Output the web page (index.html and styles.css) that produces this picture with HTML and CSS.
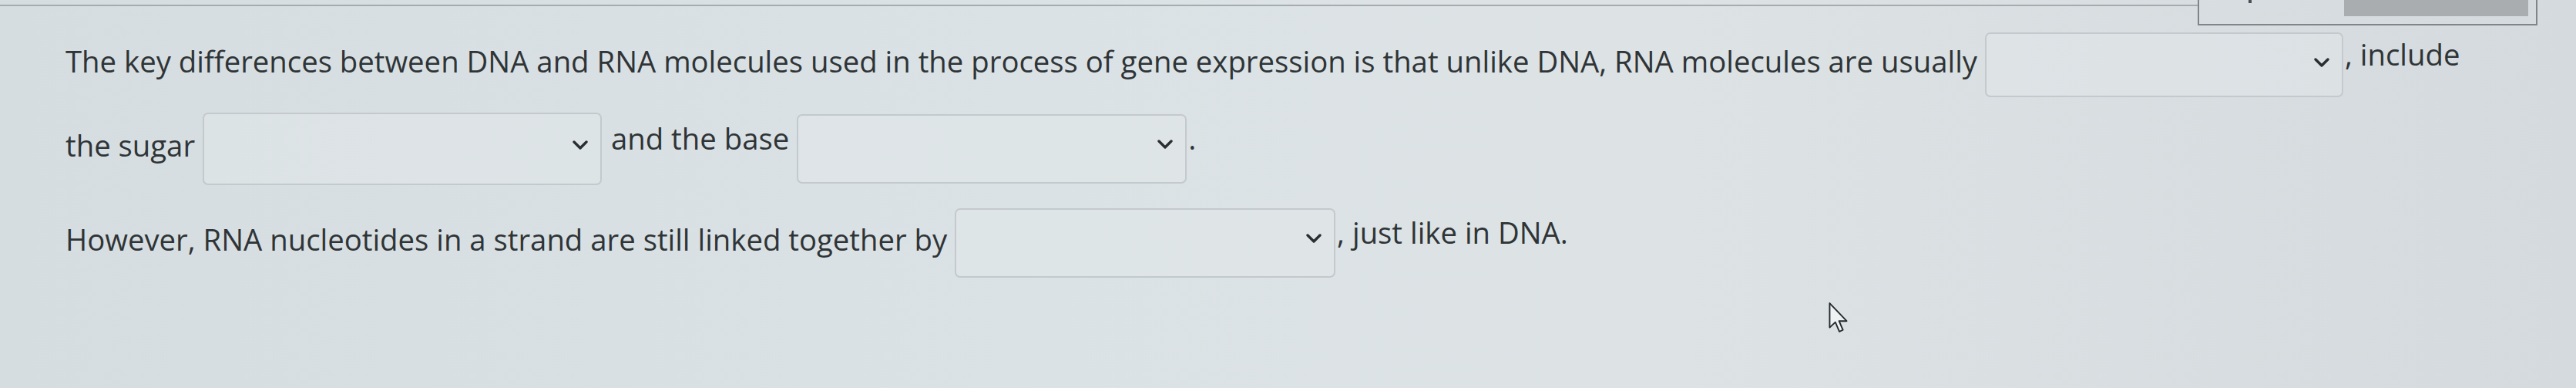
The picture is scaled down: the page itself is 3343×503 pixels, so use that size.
FILE: index.html
```html
<!DOCTYPE html>
<html lang="en">
<head>
<meta charset="utf-8">
<title>Gene expression question</title>
<link rel="stylesheet" href="styles.css">
</head>
<body>
<header class="topbar">
  <div class="rule"></div>
  <div class="help-box">
    <span class="help-mark"></span>
    <div class="help-btn"></div>
  </div>
</header>
<main class="question">
  <p class="para">The key differences between DNA and RNA molecules used in the process of gene expression is that unlike DNA, RNA molecules are usually <span class="select select-form"><svg class="chev" viewBox="0 0 20 12" width="20" height="12"><polyline points="2,2 10,10 18,2"/></svg></span><span class="after">, include</span><br>the sugar <span class="select select-sugar"><svg class="chev" viewBox="0 0 20 12" width="20" height="12"><polyline points="2,2 10,10 18,2"/></svg></span><span class="after"> and the base</span> <span class="select select-base"><svg class="chev" viewBox="0 0 20 12" width="20" height="12"><polyline points="2,2 10,10 18,2"/></svg></span><span class="after">.</span></p>
  <p class="para">However, RNA nucleotides in a strand are still linked together by <span class="select select-link"><svg class="chev" viewBox="0 0 20 12" width="20" height="12"><polyline points="2,2 10,10 18,2"/></svg></span><span class="after">, just like in DNA.</span></p>
</main>
<svg class="cursor" viewBox="0 0 13 20" width="28" height="42"><path d="M1,1 L1,16 L4.5,12.7 L7,18.5 L9.2,17.5 L6.8,12 L11.5,12 Z"/></svg>
</body>
</html>
```
FILE: styles.css
```css
html, body {
  margin: 0;
  padding: 0;
}
body {
  width: 3343px;
  height: 503px;
  overflow: hidden;
  position: relative;
  background: linear-gradient(90deg, #d6dde0 0%, #dbe2e5 40%, #dde3e5 65%, #d4dadd 100%);
  font-family: "Open Sans", "Liberation Sans", sans-serif;
  color: #2f3437;
}
.topbar {
  display: flex;
  align-items: flex-start;
  height: 32px;
  padding-right: 50px;
}
.rule {
  flex: 1;
  height: 6px;
  border-bottom: 2px solid #a6abaf;
}
.help-box {
  box-sizing: border-box;
  width: 441px;
  height: 33px;
  border: 2px solid #80858a;
  border-top: none;
  display: flex;
  justify-content: space-between;
  align-items: flex-start;
  padding: 0 10px 0 64px;
}
.help-mark {
  width: 4px;
  height: 4px;
  background: #4a4f53;
}
.help-btn {
  width: 239px;
  height: 21px;
  background: #a9adb0;
}
.question {
  padding: 0 0 0 85px;
}
.para {
  margin: 0;
  font-size: 38.3px;
  line-height: 52px;
}
.para + .para {
  margin-top: 10px;
}
.select {
  display: inline-flex;
  justify-content: flex-end;
  align-items: flex-start;
  box-sizing: border-box;
  width: 495px;
  height: 88px;
  margin: 10px 2px 10px 0;
  padding: 31px 16px 0 0;
  border: 2px solid #c3c9cc;
  border-radius: 7px;
  background: rgba(226, 231, 233, 0.5);
  vertical-align: middle;
}
.select-form { width: 465px; height: 84px; }
.select-sugar { width: 518px; height: 94px; padding-top: 34px; }
.select-base { width: 506px; height: 90px; }
.select-link { width: 494px; height: 90px; }
.chev {
  fill: none;
  stroke: #2a2e32;
  stroke-width: 3.4;
  stroke-linecap: round;
  stroke-linejoin: round;
}
.after {
  vertical-align: 9px;
}
.cursor {
  position: absolute;
  left: 2372px;
  top: 391px;
  fill: #eef2f3;
  stroke: #25292c;
  stroke-width: 0.9;
  stroke-linejoin: round;
}
```
